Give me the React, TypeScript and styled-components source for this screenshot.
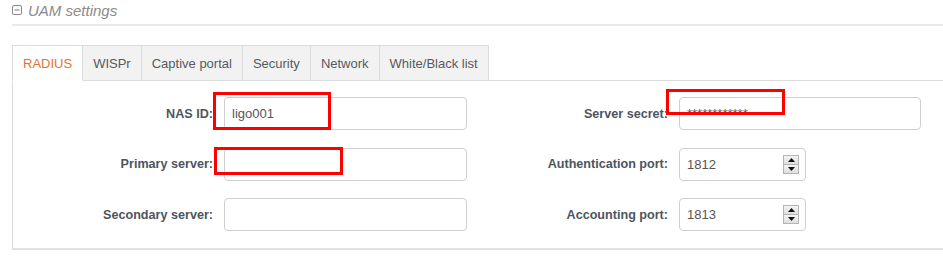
import React from 'react'
import styled, { createGlobalStyle } from 'styled-components'

const GlobalStyle = createGlobalStyle`
  html, body {
    margin: 0;
    padding: 0;
    background: #ffffff;
    overflow: hidden;
  }
  body {
    font-family: 'Liberation Sans', Arial, sans-serif;
  }
`

const Page = styled.div`
  position: relative;
  width: 943px;
  height: 267px;
  overflow: hidden;
  padding-left: 12px;
  box-sizing: border-box;
`

const Header = styled.div`
  display: flex;
  align-items: center;
  gap: 6px;
  height: 20px;
  padding-bottom: 4px;
  border-bottom: 2px solid #e9e9e9;
  width: 960px;
  color: #8a8a8a;
  font-size: 15px;
  font-style: italic;
`

const TabBar = styled.div`
  display: flex;
  margin-top: 19px;
  width: 960px;
  border-bottom: 1px solid #dcdcdc;
`

const Tab = styled.div<{ $active?: boolean }>`
  display: flex;
  align-items: center;
  padding: 0 10px;
  font-size: 13px;
  box-sizing: border-box;
  height: 36px;
  margin-bottom: -1px;
  border: 1px solid #dcdcdc;
  border-left-width: ${p => (p.$active ? '1px' : '0')};
  border-bottom: 1px solid ${p => (p.$active ? '#ffffff' : '#dcdcdc')};
  background: ${p => (p.$active ? '#ffffff' : '#f2f2f2')};
  color: ${p => (p.$active ? '#e3742d' : '#555a60')};
`

const Panel = styled.div`
  width: 960px;
  box-sizing: border-box;
  border-left: 1px solid #dcdcdc;
  border-bottom: 2px solid #e2e2e2;
  padding: 16px 0 17px 0;
  display: grid;
  grid-template-columns: 455px 455px;
  row-gap: 17.5px;
`

const Field = styled.div`
  display: flex;
  align-items: center;
`

const Label = styled.label`
  width: 200px;
  margin-right: 11px;
  text-align: right;
  font-size: 12.6px;
  font-weight: bold;
  color: #4c5561;
  white-space: nowrap;
`

const InputBox = styled.div<{ $w: number }>`
  position: relative;
  width: ${p => p.$w}px;
  height: 33px;
  box-sizing: border-box;
  border: 1px solid #cfcfcf;
  border-radius: 4px;
  display: flex;
  align-items: center;
  padding-left: 7px;
  font-size: 13px;
  color: #555;
`

const Spinner = styled.div`
  position: absolute;
  right: 6px;
  top: 6px;
  width: 16px;
  height: 19px;
  display: flex;
  flex-direction: column;
  box-sizing: border-box;
  border: 1px solid #b4b4b4;
`

const SpinHalf = styled.div`
  flex: 1;
  display: flex;
  align-items: center;
  justify-content: center;
  background: linear-gradient(#f4f4f4, #dedede);
  & + & {
    border-top: 1px solid #b4b4b4;
  }
`

const Marker = styled.div`
  position: absolute;
  border: 3px solid #ff0000;
  box-sizing: border-box;
`

const Arrow = ({ up }: { up?: boolean }) => (
  <svg width="7" height="4" viewBox="0 0 7 4">
    <path d={up ? 'M0 4 L3.5 0 L7 4 Z' : 'M0 0 L3.5 4 L7 0 Z'} fill="#111" />
  </svg>
)

const CollapseIcon = () => (
  <svg width="10" height="10" viewBox="0 0 10 10">
    <rect x="0.5" y="0.5" width="9" height="9" rx="1.5" fill="none" stroke="#8a8a8a" />
    <line x1="2.5" y1="5" x2="7.5" y2="5" stroke="#8a8a8a" strokeWidth="1.2" />
  </svg>
)

type FieldProps = { label: string; value?: string; width?: number; spin?: boolean }

const FormField = ({ label, value = '', width = 243, spin }: FieldProps) => (
  <Field>
    <Label>{label}</Label>
    <InputBox $w={width}>
      {value}
      {spin && (
        <Spinner>
          <SpinHalf>
            <Arrow up />
          </SpinHalf>
          <SpinHalf>
            <Arrow />
          </SpinHalf>
        </Spinner>
      )}
    </InputBox>
  </Field>
)

const tabs = ['RADIUS', 'WISPr', 'Captive portal', 'Security', 'Network', 'White/Black list']

export default function App() {
  return (
    <Page>
      <GlobalStyle />
      <Header>
        <CollapseIcon />
        <span>UAM settings</span>
      </Header>
      <TabBar>
        {tabs.map((t, i) => (
          <Tab key={t} $active={i === 0}>
            {t}
          </Tab>
        ))}
      </TabBar>
      <Panel>
        <FormField label="NAS ID:" value="ligo001" />
        <FormField label="Server secret:" value="************" width={242} />
        <FormField label="Primary server:" />
        <FormField label="Authentication port:" value="1812" width={127} spin />
        <FormField label="Secondary server:" />
        <FormField label="Accounting port:" value="1813" width={127} spin />
      </Panel>
      <Marker style={{ left: 213, top: 92, width: 118, height: 38 }} />
      <Marker style={{ left: 214, top: 147, width: 129, height: 28 }} />
      <Marker style={{ left: 666, top: 89, width: 119, height: 26 }} />
    </Page>
  )
}
